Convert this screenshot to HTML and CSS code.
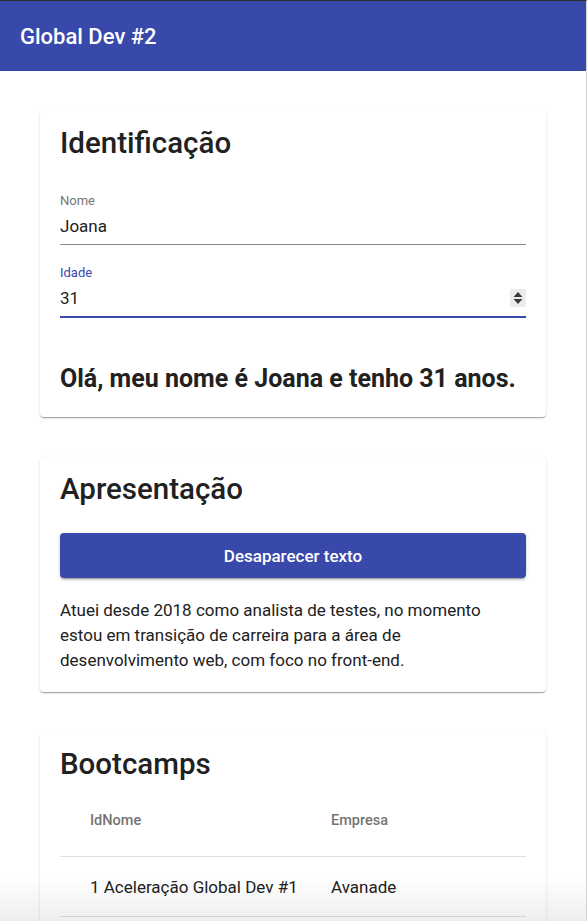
FILE: index.html
```html
<!DOCTYPE html>
<html lang="pt">
<head>
<meta charset="utf-8">
<title>Global Dev #2</title>
<link rel="stylesheet" href="styles.css">
</head>
<body>
<div class="frame">
  <header class="appbar">
    <h1 class="appbar-title">Global Dev #2</h1>
  </header>
  <main class="content">
    <section class="card">
      <h2 class="card-title">Identificação</h2>
      <div class="field">
        <label class="field-label">Nome</label>
        <div class="field-input">Joana</div>
      </div>
      <div class="field focused">
        <label class="field-label">Idade</label>
        <div class="field-input">
          <span>31</span>
          <span class="spinner">
            <svg width="16" height="18" viewBox="0 0 16 18"><path d="M8 3 L12.5 8 H3.5 Z M8 15 L12.5 10 H3.5 Z" fill="#3a3a3a"/></svg>
          </span>
        </div>
      </div>
      <p class="greeting">Olá, meu nome é Joana e tenho 31 anos.</p>
    </section>

    <section class="card card-tight">
      <h2 class="card-title">Apresentação</h2>
      <button class="btn">Desaparecer texto</button>
      <p class="bio">Atuei desde 2018 como analista de testes, no momento estou em transição de carreira para a área de desenvolvimento web, com foco no front-end.</p>
    </section>

    <section class="card">
      <h2 class="card-title">Bootcamps</h2>
      <div class="table">
        <div class="row head">
          <div class="cell c1">IdNome</div>
          <div class="cell c2">Empresa</div>
        </div>
        <div class="row">
          <div class="cell c1">1 Aceleração Global Dev #1</div>
          <div class="cell c2">Avanade</div>
        </div>
      </div>
    </section>
  </main>
  <div class="fade"></div>
</div>
</body>
</html>
```
FILE: styles.css
```css
* { box-sizing: border-box; }
html, body { margin: 0; padding: 0; }
body {
  font-family: Roboto, "Noto Sans", sans-serif;
  color: #212121;
  background: #fff;
  height: 921px;
  overflow: hidden;
}
.frame {
  position: relative;
  height: 921px;
  border-top: 1px solid #2b2b2b;
  border-right: 1px solid #d6d6d6;
  overflow: hidden;
}
.appbar {
  background: #3949ab;
  height: 70px;
  display: flex;
  align-items: center;
  padding: 0 20px;
}
.appbar-title {
  margin: 0;
  color: #fff;
  font-size: 22px;
  font-weight: 500;
}
.content {
  padding: 40px 40px;
  display: flex;
  flex-direction: column;
  gap: 40px;
}
.card {
  background: #fff;
  border-radius: 4px;
  box-shadow: 0 2px 1px -1px rgba(0,0,0,.2), 0 1px 1px 0 rgba(0,0,0,.14), 0 1px 3px 0 rgba(0,0,0,.12);
  padding: 14px 20px 24px;
}
.card-tight { padding-bottom: 19px; }
.card-title {
  margin: 0;
  font-size: 29.5px;
  font-weight: 500;
  line-height: 36px;
  color: #212121;
}
.field { margin-top: 21px; }
.card-title + .field { margin-top: 33px; }
.field-label {
  display: block;
  font-size: 13px;
  line-height: 14px;
  color: #757575;
}
.field-input {
  display: flex;
  align-items: center;
  justify-content: space-between;
  font-size: 17px;
  line-height: 20px;
  padding: 8px 0 8px;
  border-bottom: 1px solid #8a8a8a;
}
.focused .field-label { color: #3949ab; }
.focused .field-input {
  border-bottom: 2px solid #3949ab;
  padding-bottom: 8px;
}
.spinner {
  width: 16px;
  height: 18px;
  background: #ececec;
  display: flex;
}
.greeting {
  margin: 47px 0 0;
  font-size: 25px;
  font-weight: 700;
  line-height: 28px;
}
.btn {
  display: block;
  width: 100%;
  margin-top: 26px;
  height: 45px;
  border: 0;
  border-radius: 4px;
  background: #3949ab;
  color: #fff;
  font-family: inherit;
  font-size: 17px;
  font-weight: 500;
  box-shadow: 0 3px 1px -2px rgba(0,0,0,.2), 0 2px 2px 0 rgba(0,0,0,.14), 0 1px 5px 0 rgba(0,0,0,.12);
}
.bio {
  margin: 20px 0 0;
  font-size: 17px;
  line-height: 25px;
  color: #212121;
}
.table { margin-top: 16px; }
.row {
  display: flex;
  border-bottom: 1px solid #e0e0e0;
  height: 60px;
  align-items: center;
}
.row.head {
  height: 59px;
  align-items: flex-start;
  padding-top: 13px;
}
.cell { font-size: 17px; line-height: 20px; }
.head .cell { font-size: 14.5px; font-weight: 500; color: #757575; }
.c1 { padding-left: 30px; width: 271px; }
.fade {
  position: absolute;
  left: 0; right: 0; bottom: 0;
  height: 45px;
  background: linear-gradient(to bottom, rgba(0,0,0,0), rgba(0,0,0,0.065));
  pointer-events: none;
}
```
